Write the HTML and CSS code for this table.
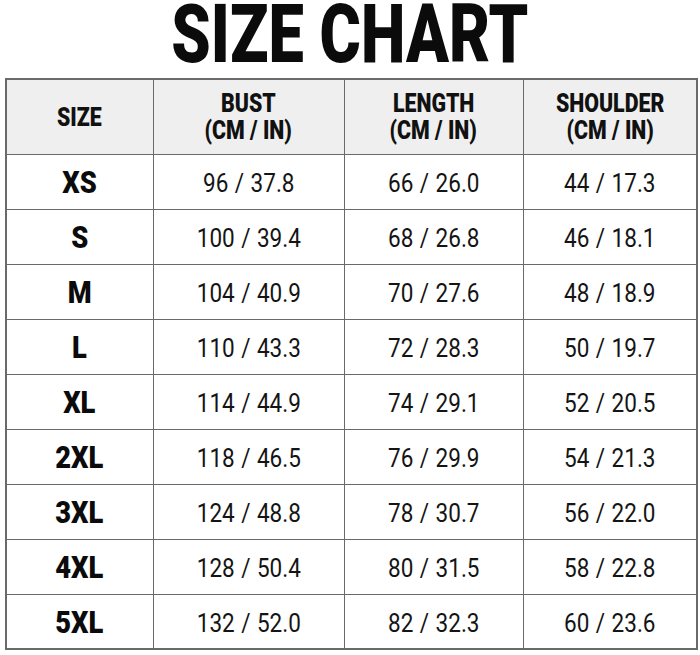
FILE: index.html
```html
<!DOCTYPE html>
<html>
<head>
<meta charset="utf-8">
<link rel="stylesheet" href="styles.css">
</head>
<body>
<div class="page">
  <h1 class="title"><span class="sx">SIZE CHART</span></h1>
  <table class="chart">
    <colgroup>
      <col class="c1"><col class="c2"><col class="c3"><col class="c4">
    </colgroup>
    <thead>
      <tr>
        <th><span class="hx">SIZE</span></th>
        <th><span class="hx">BUST</span><br><span class="hx">(CM / IN)</span></th>
        <th><span class="hx">LENGTH</span><br><span class="hx">(CM / IN)</span></th>
        <th><span class="hx">SHOULDER</span><br><span class="hx">(CM / IN)</span></th>
      </tr>
    </thead>
    <tbody>
      <tr><td class="sz"><span class="zx">XS</span></td><td><span class="nx">96 / 37.8</span></td><td><span class="nx">66 / 26.0</span></td><td><span class="nx">44 / 17.3</span></td></tr>
      <tr><td class="sz"><span class="zx">S</span></td><td><span class="nx">100 / 39.4</span></td><td><span class="nx">68 / 26.8</span></td><td><span class="nx">46 / 18.1</span></td></tr>
      <tr><td class="sz"><span class="zx">M</span></td><td><span class="nx">104 / 40.9</span></td><td><span class="nx">70 / 27.6</span></td><td><span class="nx">48 / 18.9</span></td></tr>
      <tr><td class="sz"><span class="zx">L</span></td><td><span class="nx">110 / 43.3</span></td><td><span class="nx">72 / 28.3</span></td><td><span class="nx">50 / 19.7</span></td></tr>
      <tr><td class="sz"><span class="zx">XL</span></td><td><span class="nx">114 / 44.9</span></td><td><span class="nx">74 / 29.1</span></td><td><span class="nx">52 / 20.5</span></td></tr>
      <tr><td class="sz"><span class="zx">2XL</span></td><td><span class="nx">118 / 46.5</span></td><td><span class="nx">76 / 29.9</span></td><td><span class="nx">54 / 21.3</span></td></tr>
      <tr><td class="sz"><span class="zx">3XL</span></td><td><span class="nx">124 / 48.8</span></td><td><span class="nx">78 / 30.7</span></td><td><span class="nx">56 / 22.0</span></td></tr>
      <tr><td class="sz"><span class="zx">4XL</span></td><td><span class="nx">128 / 50.4</span></td><td><span class="nx">80 / 31.5</span></td><td><span class="nx">58 / 22.8</span></td></tr>
      <tr><td class="sz"><span class="zx">5XL</span></td><td><span class="nx">132 / 52.0</span></td><td><span class="nx">82 / 32.3</span></td><td><span class="nx">60 / 23.6</span></td></tr>
    </tbody>
  </table>
</div>
</body>
</html>
```
FILE: styles.css
```css
html, body {
  margin: 0;
  padding: 0;
  background: #ffffff;
}
.page {
  width: 700px;
  height: 655px;
  font-family: Roboto, "DejaVu Sans", sans-serif;
  color: #111111;
}
.title {
  margin: 0;
  padding-top: 1px;
  height: 77px;
  text-align: center;
  font-size: 82px;
  font-weight: 900;
  line-height: 66px;
  color: #0b0b0b;
  white-space: nowrap;
}
.sx {
  display: inline-block;
  transform: scaleX(0.77);
}
.chart {
  margin-left: 5px;
  width: 691px;
  border-collapse: collapse;
  table-layout: fixed;
  border: 2px solid #6a6a6a;
}
.c1 { width: 147px; }
.c2 { width: 191px; }
.c3 { width: 179px; }
.c4 { width: 174px; }
.chart th, .chart td {
  border: 1.5px solid #6a6a6a;
  text-align: center;
  padding: 0;
  white-space: nowrap;
}
.chart thead tr {
  height: 75px;
  background: #efefef;
}
.chart th {
  font-size: 26px;
  font-weight: 900;
  line-height: 27px;
  color: #111111;
  padding-top: 1px;
}
.hx {
  display: inline-block;
  transform: scaleX(0.82);
  line-height: 27px;
}
.chart tbody tr {
  height: 55px;
}
.chart td {
  font-size: 25px;
  font-weight: 400;
  color: #141414;
  padding-top: 4px;
}
.chart td.sz {
  font-size: 31px;
  font-weight: 900;
  color: #0b0b0b;
  padding-top: 2px;
}
.zx {
  display: inline-block;
  transform: scaleX(0.88);
}
.nx {
  display: inline-block;
  transform: scaleX(0.9);
  word-spacing: 1px;
}
```
